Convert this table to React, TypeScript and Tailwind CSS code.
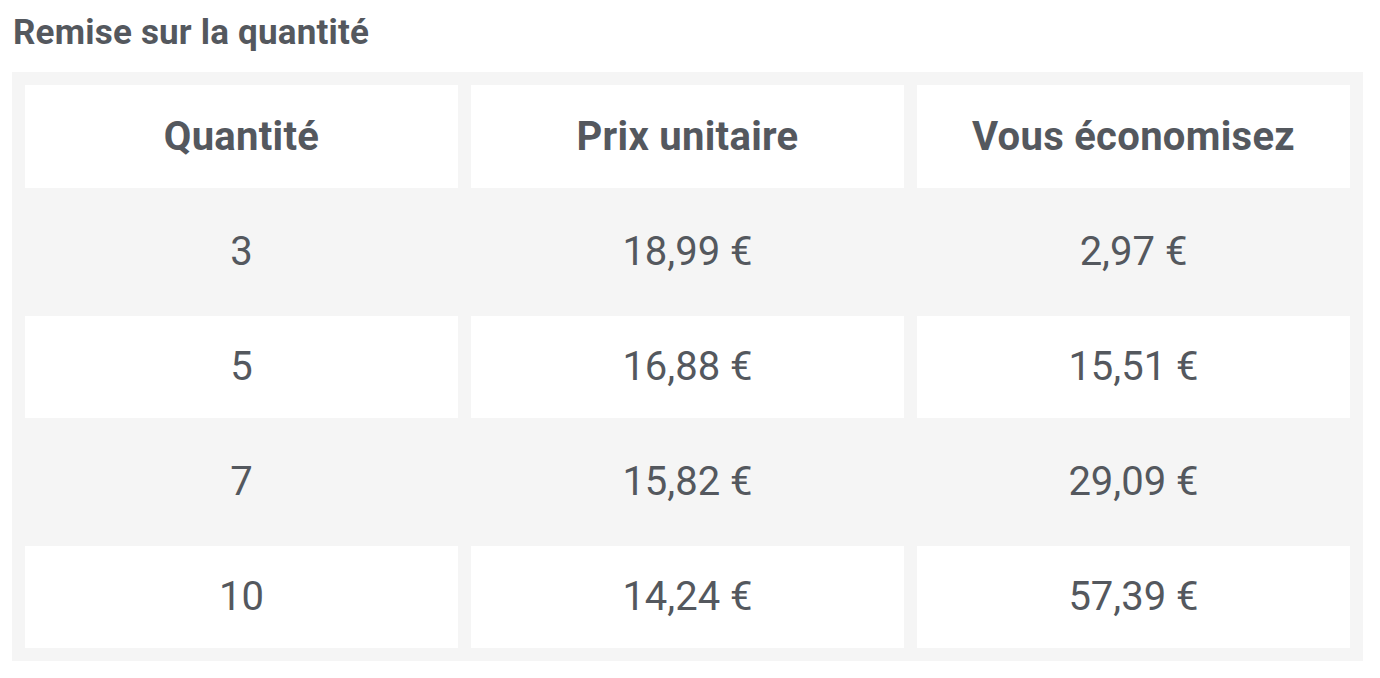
const rows = [
  ['3', '18,99 €', '2,97 €'],
  ['5', '16,88 €', '15,51 €'],
  ['7', '15,82 €', '29,09 €'],
  ['10', '14,24 €', '57,39 €'],
];

export default function App() {
  return (
    <div className="min-h-screen bg-white font-['Roboto',sans-serif] text-[#54585e]">
      <h2 className="pl-[13px] pt-[15px] text-[35px] tracking-[0.2px] font-bold leading-[36px] mb-[21px]">
        Remise sur la quantité
      </h2>
      <div className="ml-[12px] w-[1351px] bg-[#f5f5f5] p-[13px] grid grid-cols-3 gap-[13px]">
        {['Quantité', 'Prix unitaire', 'Vous économisez'].map((h) => (
          <div key={h} className="h-[103px] bg-white flex items-center justify-center text-[40px] tracking-[0.3px] font-bold">
            {h}
          </div>
        ))}
        {rows.map((row, i) =>
          row.map((cell, j) => (
            <div
              key={i + '-' + j}
              className={`h-[102px] flex items-center justify-center text-[40px] ${
                i % 2 === 1 ? 'bg-white' : 'bg-[#f5f5f5]'
              }`}
            >
              {cell}
            </div>
          ))
        )}
      </div>
    </div>
  );
}
